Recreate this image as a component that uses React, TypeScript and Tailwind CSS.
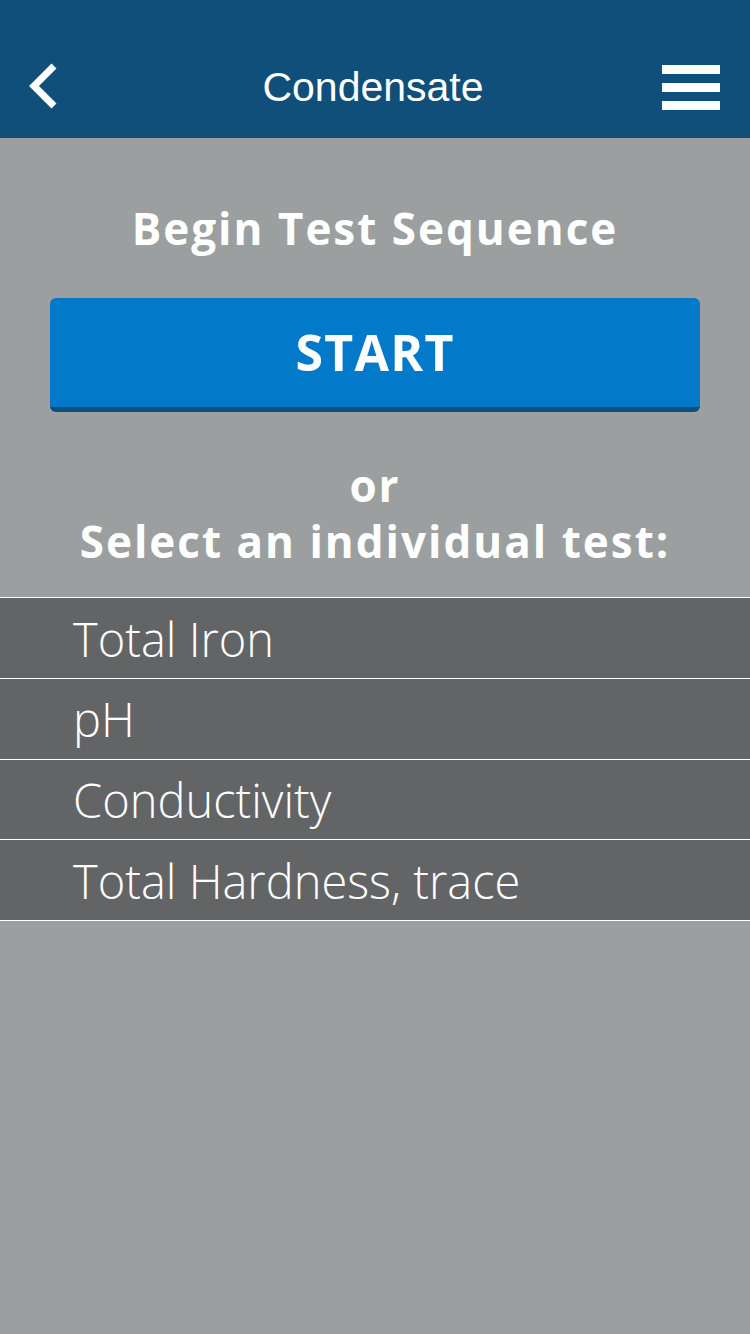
import React from "react";

const tests = ["Total Iron", "pH", "Conductivity", "Total Hardness, trace"];

export default function App() {
  return (
    <div className="min-h-[1334px] w-[750px] bg-[#9c9fa0] font-['Open_Sans',sans-serif]">
      {/* header */}
      <div className="flex h-[138px] items-end bg-[#0f4f7a] pb-[26px]">
        <div className="flex h-[48px] w-full items-center justify-between pl-[26px] pr-[30px]">
          <svg width="34" height="46" viewBox="0 0 34 46" className="mt-[-4px]">
            <path d="M28 3 L8 23 L28 43" fill="none" stroke="#fff" strokeWidth="7" />
          </svg>
          <div className="ml-[24px] font-['Liberation_Sans',sans-serif] text-[41px] text-white">Condensate</div>
          <div className="mt-[-2px] flex w-[58px] flex-col gap-[9px]">
            <div className="h-[9px] bg-white" />
            <div className="h-[9px] bg-white" />
            <div className="h-[9px] bg-white" />
          </div>
        </div>
      </div>

      <div className="pt-[60px] text-center text-[44px] font-bold leading-[60px] tracking-[2px] text-white">
        Begin Test Sequence
      </div>

      <div className="px-[50px] pt-[40px]">
        <button className="h-[114px] w-full rounded-[6px] border-b-[5px] border-[#0b4f80] bg-[#0279c9] text-[50px] font-bold tracking-wide text-white">
          START
        </button>
      </div>

      <div className="pt-[45px] text-center text-[44px] font-bold leading-[56px] tracking-[2px] text-white">
        <div>or</div>
        <div>Select an individual test:</div>
      </div>

      <div className="mt-[28px] border-t border-white">
        {tests.map((t) => (
          <div
            key={t}
            className="flex h-[80.75px] items-center border-b border-white bg-[#636466] pl-[73px] pt-[2px] text-[47px] font-light text-white"
          >
            {t}
          </div>
        ))}
      </div>
    </div>
  );
}
